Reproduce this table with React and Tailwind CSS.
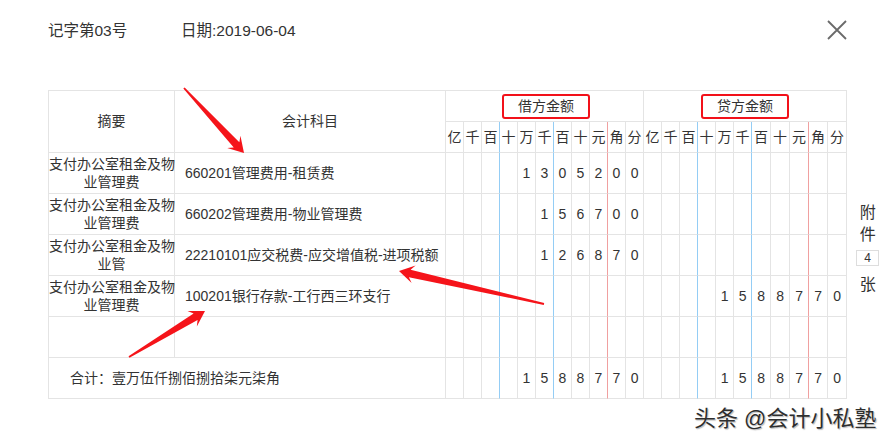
import React from "react";

const UNITS = ["亿", "千", "百", "十", "万", "千", "百", "十", "元", "角", "分"];
const COLS = [18, 18, 18, 18, 18, 18, 18, 18, 18, 18, 18, 18, 18, 18, 18, 18, 18, 19, 19, 19, 19, 19];

const rows = [
  { memo: ["支付办公室租金及物", "业管理费"], account: "660201管理费用-租赁费", debit: "1305200", credit: "" },
  { memo: ["支付办公室租金及物", "业管理费"], account: "660202管理费用-物业管理费", debit: "156700", credit: "" },
  { memo: ["支付办公室租金及物", "业管"], account: "22210101应交税费-应交增值税-进项税额", debit: "126870", credit: "" },
  { memo: ["支付办公室租金及物", "业管理费"], account: "100201银行存款-工行西三环支行", debit: "", credit: "1588770" },
  { memo: [], account: "", debit: "", credit: "" },
];

// spread a digit string so its last digit lands in the 分 column
const spread = (s) => {
  const a = Array(11).fill("");
  s.split("").forEach((c, i) => (a[11 - s.length + i] = c));
  return a;
};

// right border colour of each money column (blue at 百|十 and 千|百, red at 元|角)
const lineCls = (i) =>
  [2, 5, 13, 16].includes(i)
    ? "border-r-[#94cdf5]"
    : [8, 19].includes(i)
    ? "border-r-[#f0a0a0]"
    : "border-r-[#e4e4e4]";

const cell = "border-r border-b border-[#e4e4e4] p-0";

function MoneyCells({ debit, credit }) {
  const all = [...spread(debit), ...spread(credit)];
  return all.map((d, i) => (
    <td key={i} className={`${cell} ${lineCls(i)} text-center`}>
      {d}
    </td>
  ));
}

function arrowPoints([x1, y1], [x2, y2]) {
  const dx = x2 - x1;
  const dy = y2 - y1;
  const L = Math.hypot(dx, dy);
  const ux = dx / L;
  const uy = dy / L;
  const nx = -uy;
  const ny = ux;
  const notch = [x2 - ux * 11, y2 - uy * 11];
  const barb = [x2 - ux * 15, y2 - uy * 15];
  const p = (b, w) => `${b[0] + nx * w},${b[1] + ny * w}`;
  return [
    p([x1, y1], 0.9),
    p(notch, 3.8),
    p(barb, 9),
    `${x2},${y2}`,
    p(barb, -9),
    p(notch, -3.8),
    p([x1, y1], -0.9),
  ].join(" ");
}

function Arrows() {
  return (
    <svg className="pointer-events-none absolute left-0 top-0" width="893" height="444">
      <polygon points={arrowPoints([184, 88], [244, 153])} fill="#f5141a" />
      <polygon points={arrowPoints([544, 304], [399, 271])} fill="#f5141a" />
      <polygon points={arrowPoints([129, 357], [205, 311])} fill="#f5141a" />
    </svg>
  );
}

export default function App() {
  return (
    <div
      className="relative h-[444px] w-[893px] overflow-hidden bg-white text-[#333] text-[14px]"
      style={{ fontFamily: '"Liberation Sans", "Noto Sans CJK SC", sans-serif' }}
    >
      <div className="pl-[48px] pt-[20px]">
        {/* Header */}
        <div className="flex h-[22px] w-[799px] items-center text-[15.5px] text-[#333]">
          <span className="w-[133px]">记字第03号</span>
          <span>日期:2019-06-04</span>
          <svg className="ml-auto -mt-[3px]" width="20" height="20" viewBox="0 0 20 20">
            <path d="M1 1 L19 19 M19 1 L1 19" stroke="#6a6a6a" strokeWidth="1.8" />
          </svg>
        </div>

        <div className="mt-[48px] flex">
          <table className="w-[799px] table-fixed border-separate border-spacing-0">
            <colgroup>
              <col className="w-[127px]" />
              <col className="w-[271px]" />
              {COLS.map((w, i) => (
                <col key={i} style={{ width: w }} />
              ))}
            </colgroup>
            <thead>
              <tr>
                <th rowSpan={2} className={`${cell} border-l border-t font-normal`}>
                  摘要
                </th>
                <th rowSpan={2} className={`${cell} border-t font-normal`}>
                  会计科目
                </th>
                <th colSpan={11} className={`${cell} h-[32px] border-t font-normal`}>
                  <span className="ml-[3px] inline-block rounded-[3px] border-[2.5px] border-[#f2111a] px-[14px] leading-[21px]">
                    借方金额
                  </span>
                </th>
                <th colSpan={11} className={`${cell} border-t font-normal`}>
                  <span className="inline-block rounded-[3px] border-[2.5px] border-[#f2111a] px-[14px] leading-[21px]">
                    贷方金额
                  </span>
                </th>
              </tr>
              <tr>
                {[...UNITS, ...UNITS].map((u, i) => (
                  <th key={i} className={`${cell} ${lineCls(i)} h-[31px] font-normal`}>
                    {u}
                  </th>
                ))}
              </tr>
            </thead>
            <tbody>
              {rows.map((r, k) => (
                <tr key={k}>
                  <td className={`${cell} h-[41px] border-l text-center leading-[18px]`}>
                    {r.memo.map((line, j) => (
                      <div key={j} className="whitespace-nowrap">
                        {line}
                      </div>
                    ))}
                  </td>
                  <td className={`${cell} whitespace-nowrap pl-[10px]`}>{r.account}</td>
                  <MoneyCells debit={r.debit} credit={r.credit} />
                </tr>
              ))}
              <tr>
                <td colSpan={2} className={`${cell} h-[41px] border-l pl-[21px]`}>
                  合计：壹万伍仟捌佰捌拾柒元柒角
                </td>
                <MoneyCells debit="1588770" credit="1588770" />
              </tr>
            </tbody>
          </table>

          {/* Attachments */}
          <div className="mt-[112px] flex w-[41px] flex-col items-center text-[16px] leading-[22px] text-[#333]">
            <span>附</span>
            <span>件</span>
            <span className="mt-[4px] flex h-[16px] w-[23px] items-center justify-center border border-[#dddddd] text-[12px] leading-none">
              4
            </span>
            <span className="mt-[8px]">张</span>
          </div>
        </div>
      </div>

      <Arrows />

      {/* Watermark */}
      <div className="absolute left-[694px] top-[404px] whitespace-nowrap text-[22px] leading-[30px] text-[#2e2e2e] [text-shadow:0_0_2px_#fff,1px_1px_1px_#aaa]">
        头条 @会计小私塾
      </div>
    </div>
  );
}
